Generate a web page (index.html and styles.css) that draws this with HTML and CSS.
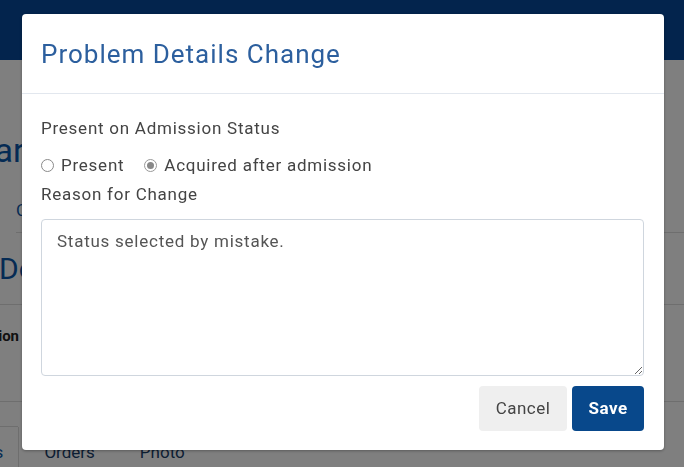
FILE: index.html
```html
<!DOCTYPE html>
<html lang="en">
<head>
<meta charset="UTF-8">
<meta name="viewport" content="width=device-width, initial-scale=1.0">
<title>Problem Details Change</title>
<link rel="stylesheet" href="styles.css">
</head>
<body>
    <div class="app">
        <header class="topbar"></header>
        <main class="page">
            <h2 class="pt-name">Summary</h2>
            <div class="pt-meta">Comfort care</div>
            <div class="section">
                <h3 class="sec-title">Documents</h3>
            </div>
            <div class="section row">
                <span class="row-label">Condition</span>
            </div>
            <div class="section spacer"></div>
            <nav class="tabs">
                <span class="tab active">Problems</span>
                <span class="tab">Orders</span>
                <span class="tab">Photo</span>
            </nav>
        </main>
    </div>

    <div class="backdrop"></div>

    <div class="modal">
        <div class="modal-header">
            <h1>Problem Details Change</h1>
        </div>
        <form class="modal-body" id="change-form">
            <div class="form-label">Present on Admission Status</div>
            <div class="radio-row">
                <label class="radio"><input type="radio" name="poa" value="present"> Present</label>
                <label class="radio"><input type="radio" name="poa" value="acquired" checked> Acquired after admission</label>
            </div>
            <label class="form-label" for="reason">Reason for Change</label>
            <textarea id="reason" name="reason">Status selected by mistake.</textarea>
            <div class="actions">
                <button type="button" class="btn btn-cancel">Cancel</button>
                <button type="button" class="btn btn-save">Save</button>
            </div>
        </form>
    </div>
</body>
</html>
```

FILE: styles.css
```css
body {
  margin: 0;
  font-family: Roboto, "Liberation Sans", Arial, sans-serif;
  background-color: #fff;
  overflow: hidden;
}
.app {
  height: 467px;
}
.topbar {
  height: 60px;
  background-color: #06489a;
}
.page {
  color: #333;
}
.pt-name {
  margin: 0;
  padding-top: 70px;
  margin-left: -104px;
  font-size: 34px;
  font-weight: 400;
  line-height: 40px;
  color: #0b56a8;
  white-space: nowrap;
}
.pt-meta {
  margin: 29px 0 0 16px;
  height: 33px;
  font-size: 17px;
  line-height: 22px;
  color: #0b56a8;
  border-bottom: 1px solid #ddd;
}
.section {
  border-bottom: 1px solid #ddd;
}
.sec-title {
  margin: 0 0 0 -1px;
  height: 71px;
  font-size: 30px;
  font-weight: 400;
  line-height: 72px;
  color: #0b56a8;
}
.row {
  height: 96px;
}
.row-label {
  display: block;
  margin-left: -46px;
  padding-top: 22px;
  font-size: 15px;
  line-height: 18px;
  font-weight: 700;
  color: #222;
}
.spacer {
  height: 24px;
  margin-right: 666px;
}
.tabs {
  display: flex;
  margin-left: -94px;
  font-size: 17px;
  line-height: 20px;
  color: #1a3e6a;
}
.tab {
  padding: 15px 20px 10px 25px;
}
.tab.active {
  padding-right: 15px;
  color: #0b56a8;
  border-right: 1px solid #ddd;
}
.backdrop {
  position: fixed;
  inset: 0;
  background-color: rgba(0, 0, 0, 0.5);
}
.modal {
  position: fixed;
  top: 14px;
  left: 22px;
  width: 642px;
  height: 436px;
  background-color: #fff;
  border-radius: 4px;
  box-shadow: 0 1px 3px rgba(0, 0, 0, 0.3);
  display: flex;
  flex-direction: column;
}
.modal-header {
  height: 79px;
  border-bottom: 1px solid #e2e7ee;
  padding: 0 19px;
  display: flex;
  align-items: center;
}
.modal-header h1 {
  margin: 0;
  font-size: 26px;
  letter-spacing: 1px;
  font-weight: 400;
  color: #2c5f9e;
}
.modal-body {
  padding: 22px 20px 19px 19px;
  display: flex;
  flex-direction: column;
  color: #444;
  font-size: 17px;
  letter-spacing: 0.75px;
}
.form-label {
  display: block;
  line-height: 24px;
}
.radio-row {
  display: flex;
  gap: 20px;
  margin: 13px 0 5px;
  line-height: 24px;
}
.radio {
  display: flex;
  align-items: center;
  gap: 7px;
}
.radio input {
  appearance: none;
  margin: 0;
  width: 13px;
  height: 13px;
  border: 1px solid #8a8a8a;
  border-radius: 50%;
  box-sizing: border-box;
  display: grid;
  place-content: center;
}
.radio input:checked {
  border-color: #999;
}
.radio input:checked::before {
  content: "";
  width: 7px;
  height: 7px;
  border-radius: 50%;
  background-color: #888;
}
textarea {
  margin-top: 13px;
  height: 157px;
  padding: 9px 15px;
  box-sizing: border-box;
  border: 1px solid #cfd6de;
  border-radius: 4px;
  font-family: inherit;
  font-size: 17px;
  letter-spacing: 0.75px;
  line-height: 24px;
  color: #555;
  resize: vertical;
}
.actions {
  display: flex;
  justify-content: flex-end;
  gap: 5px;
  margin-top: 10px;
}
.btn {
  height: 45px;
  padding: 0 0 2px;
  border: none;
  border-radius: 4px;
  font-family: inherit;
  font-size: 17px;
  letter-spacing: 0.5px;
  cursor: pointer;
}
.btn-cancel {
  width: 88px;
  background-color: #efefef;
  color: #444;
}
.btn-save {
  width: 72px;
  background-color: #08488b;
  color: #fff;
  font-weight: 700;
}
```
